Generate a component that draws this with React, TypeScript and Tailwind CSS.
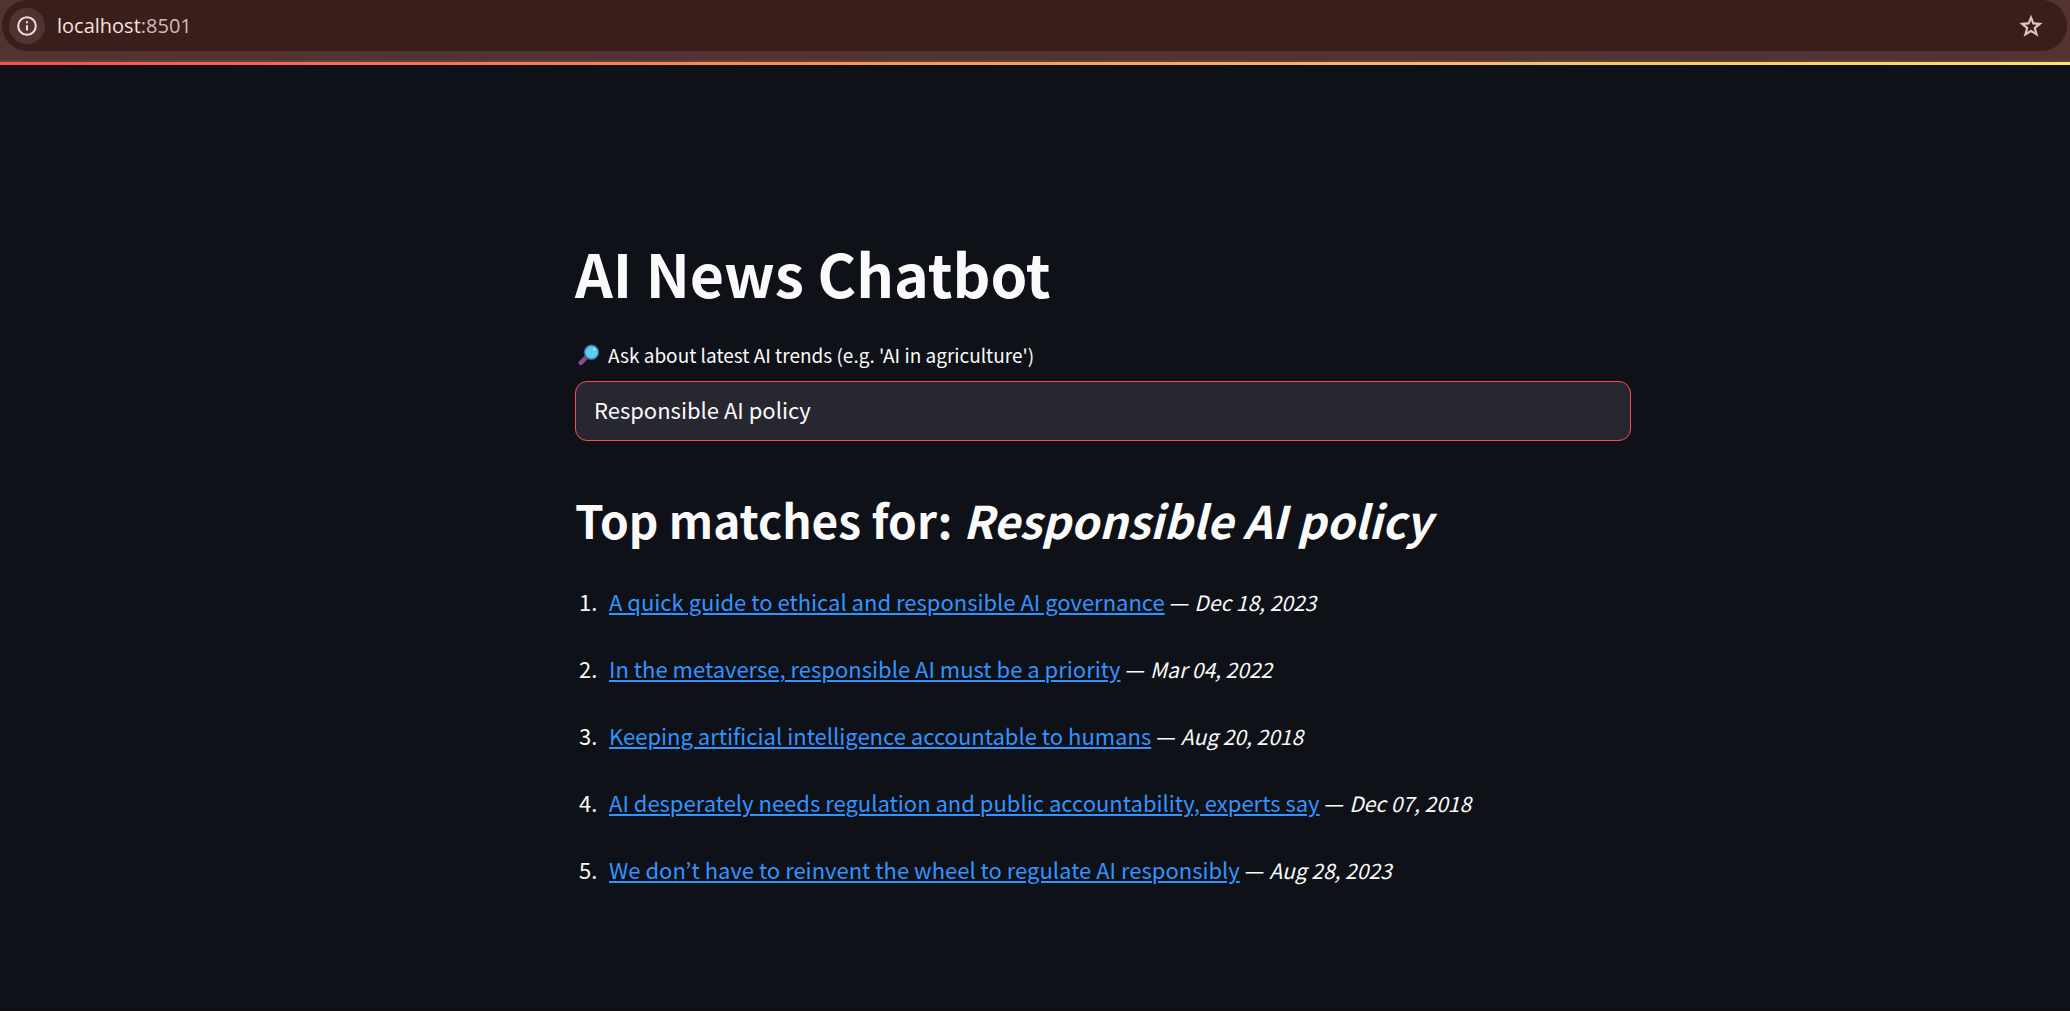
import { useState } from "react";

type Article = { title: string; date: string };

const articles: Article[] = [
  { title: "A quick guide to ethical and responsible AI governance", date: "Dec 18, 2023" },
  { title: "In the metaverse, responsible AI must be a priority", date: "Mar 04, 2022" },
  { title: "Keeping artificial intelligence accountable to humans", date: "Aug 20, 2018" },
  { title: "AI desperately needs regulation and public accountability, experts say", date: "Dec 07, 2018" },
  { title: "We don’t have to reinvent the wheel to regulate AI responsibly", date: "Aug 28, 2023" },
];

function InfoIcon() {
  return (
    <svg width="20" height="20" viewBox="0 0 20 20" fill="none" stroke="#f1dcd9" strokeWidth="2" aria-hidden="true">
      <circle cx="10" cy="10" r="8.8" />
      <path d="M10 9.2v5.4" />
      <path d="M10 5.2v2.1" />
    </svg>
  );
}

function StarIcon() {
  return (
    <svg width="24" height="24" viewBox="0 0 24 24" fill="#dcc3c0" fillRule="evenodd" aria-hidden="true">
      <path d="M12 0.6 15 8.3 23.6 9 17 14.4 19.4 22.8 12 18.2 4.6 22.8 7 14.4 0.4 9 9 8.3ZM12 6.4 10.4 10.4 6.2 10.8 9.4 13.5 8.3 17.9 12 15.5 15.7 17.9 14.6 13.5 17.8 10.8 13.6 10.4Z" />
    </svg>
  );
}

function MagnifierIcon() {
  return (
    <svg width="22" height="22" viewBox="0 0 22 22" aria-hidden="true">
      <path d="M2.8 18.8 8.2 13.4" stroke="#8b4a8f" strokeWidth="4.6" strokeLinecap="round" />
      <path d="M7.2 14.4 9.4 12.2" stroke="#5d4a80" strokeWidth="3" />
      <circle cx="13.5" cy="8.3" r="7" fill="#5bcdf0" stroke="#41639f" strokeWidth="1.4" />
      <circle cx="16.4" cy="5.2" r="1.2" fill="#a5e7fa" />
    </svg>
  );
}

function AddressBar() {
  return (
    <header className="border-b-2 border-[#54423f] bg-[#523331] pr-[3px] pb-[9px] pl-[2px]">
      <div className="flex h-[51px] items-center rounded-full bg-[#3a1e1c] pr-6 pl-[7px]">
        <button
          type="button"
          aria-label="View site information"
          className="flex size-9 items-center justify-center rounded-full bg-[#523331]"
        >
          <InfoIcon />
        </button>
        <div className="ml-3 flex-1 font-['Open_Sans',sans-serif] text-xl text-[#f5e2df]">
          localhost<span className="text-[#d3bab7]">:8501</span>
        </div>
        <button type="button" aria-label="Bookmark this page">
          <StarIcon />
        </button>
      </div>
    </header>
  );
}

export default function App() {
  const [query, setQuery] = useState("Responsible AI policy");

  return (
    <div className="flex min-h-screen flex-col bg-[#0e1117] font-['Noto_Sans_CJK_KR',sans-serif] text-[#fafafa]">
      <AddressBar />
      <div className="h-[3px] bg-linear-to-r from-[#ff4b4b] to-[#ffe16b]" />
      <main className="flex-1 pt-[168px] pl-[136px]">
        <div className="mx-auto max-w-[1056px]">
          <h1 className="text-[59px] leading-[80px] font-bold">AI News Chatbot</h1>
          <label htmlFor="query" className="mt-[26px] flex items-center gap-2 pl-[3px] text-[19px] leading-8">
            <MagnifierIcon />
            Ask about latest AI trends (e.g. &#39;AI in agriculture&#39;)
          </label>
          <input
            id="query"
            type="text"
            value={query}
            onChange={(event) => setQuery(event.target.value)}
            className="mt-[10px] h-[60px] w-full rounded-xl border border-[#ff4b4b] bg-[#262730] px-[18px] pb-1 text-[22px] outline-none"
          />
          <h2 className="mt-[46px] text-[46px] leading-[64px] font-bold">
            Top matches for: <em className="text-[45px] leading-none">{query}</em>
          </h2>
          <ol className="mt-8 space-y-[31px] text-[22px] leading-9">
            {articles.map((article, index) => (
              <li key={article.title} className="flex">
                <span className="w-[34px] pl-1">{index + 1}.</span>
                <p>
                  <a href="#" className="text-[#3294ff] underline decoration-2 underline-offset-2">{article.title}</a>{" "}
                  — <em className="text-[21px] leading-none">{article.date}</em>
                </p>
              </li>
            ))}
          </ol>
        </div>
      </main>
      <footer className="h-0.5 bg-[#0a0c11]" />
    </div>
  );
}
